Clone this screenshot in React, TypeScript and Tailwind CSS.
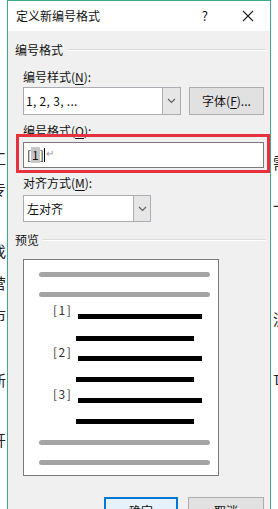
import React from "react";

const FONT = { fontFamily: '"Microsoft YaHei","Noto Sans CJK SC","Noto Sans",sans-serif' };

function Chevron() {
  return (
    <svg width="9" height="6" viewBox="0 0 9 6">
      <polyline points="1,1 4.5,4.5 8,1" fill="none" stroke="#606060" strokeWidth="1.2" />
    </svg>
  );
}

function U({ c }: { c: string }) {
  return <span className="underline underline-offset-2">{c}</span>;
}

function Bar({ gray, ml, w, mt }: { gray?: boolean; ml: number; w: number; mt: number }) {
  return (
    <div
      className={gray ? "h-[5px] rounded-full bg-[#a4a4a4]" : "h-[5px] bg-black"}
      style={{ marginLeft: ml, width: w, marginTop: mt }}
    />
  );
}

function NumRow({ n, mt }: { n: string; mt: number }) {
  return (
    <div className="relative" style={{ marginTop: mt }}>
      <span
        className="absolute left-[29px] top-[-11px] text-[12px] leading-[14px] text-[#333] tracking-[1.5px]"
        style={{ fontFamily: '"Noto Sans CJK SC",sans-serif' }}
      >
        [{n}]
      </span>
      <div className="ml-[54px] h-[5px] w-[124px] bg-black" />
    </div>
  );
}

export default function App() {
  const leftChars = [
    { y: 150, c: "工" },
    { y: 181, c: "专" },
    { y: 212, c: "'" },
    { y: 243, c: "找" },
    { y: 275, c: "营" },
    { y: 307, c: "市" },
    { y: 340, c: "'" },
    { y: 372, c: "新" },
    { y: 432, c: "开" },
  ];
  const rightChars = [
    { y: 155, c: "需" },
    { y: 198, c: "一" },
    { y: 311, c: "流" },
    { y: 370, c: "亡" },
  ];
  return (
    <div className="h-[509px] w-[278px] overflow-hidden bg-white flex" style={FONT}>
      <div className="relative w-[7px] h-full overflow-hidden">
        {leftChars.map((ch, i) => (
          <span
            key={i}
            className="absolute left-[-9px] text-[15px] leading-[16px] text-[#222]"
            style={{ top: ch.y }}
          >
            {ch.c}
          </span>
        ))}
      </div>
      <div className="w-[264px] h-[540px] shrink-0 border border-[#3da88a] bg-[#f0f0f0] flex flex-col">
        <div className="h-[30px] bg-white flex items-center text-[12px] text-[#111]">
          <span className="pl-[8px] leading-[16px]">定义新编号格式</span>
          <span className="ml-auto mr-[34px] leading-[16px] text-[13px]">?</span>
          <svg width="12" height="12" viewBox="0 0 12 12" className="mr-[16px]">
            <line x1="1" y1="1" x2="11" y2="11" stroke="#222" strokeWidth="1.1" />
            <line x1="11" y1="1" x2="1" y2="11" stroke="#222" strokeWidth="1.1" />
          </svg>
        </div>
        <div className="flex flex-col pl-[7px] text-[12px] text-[#111]">
          <div className="mt-[11px] flex items-center h-[16px]">
            <span className="leading-[16px]">编号格式</span>
            <div className="ml-[4px] mr-[4px] flex-1 h-[2px] border-t border-[#dcdcdc] border-b-white border-b" />
          </div>
          <div className="ml-[8px] mt-[11px] leading-[16px] h-[16px]">
            编号样式(<U c="N" />):
          </div>
          <div className="ml-[8px] mt-[2px] flex">
            <div className="w-[158px] h-[28px] border border-[#abadb3] bg-white flex">
              <span className="flex-1 pl-[2px] leading-[26px] text-[12px] tracking-[0.3px]">1, 2, 3, ...</span>
              <div className="w-[18px] h-full bg-[#e6e6e6] border-l border-[#abadb3] flex items-center justify-center">
                <Chevron />
              </div>
            </div>
            <div className="ml-[8px] w-[75px] h-[28px] border border-[#adadad] bg-[#e1e1e1] flex items-center justify-center leading-[16px]">
              字体(<U c="F" />)...
            </div>
          </div>
          <div className="ml-[8px] mt-[8px] leading-[16px] h-[16px]">
            编号格式(<U c="O" />):
          </div>
          <div className="ml-[8px] mt-[3px] relative">
            <div className="w-[241px] h-[26px] border border-[#7a7a7a] bg-white flex items-center pl-[3px] leading-[16px]">
              <span>[</span>
              <span className="bg-[#c8c8c8] px-[1px]">1</span>
              <span>]</span>
              <span className="w-px h-[14px] bg-black" />
              <span className="text-[10px] text-[#9a9a9a] ml-[1px] -mt-[4px]">↵</span>
            </div>
            <div className="absolute left-[-7px] top-[-8px] w-[254px] h-[39px] border-[3px] border-[#e5323e] pointer-events-none" />
          </div>
          <div className="ml-[8px] mt-[7px] leading-[16px] h-[16px]">
            对齐方式(<U c="M" />):
          </div>
          <div className="ml-[8px] mt-[4px] w-[128px] h-[27px] border border-[#abadb3] bg-white flex">
            <span className="flex-1 pl-[3px] leading-[25px]">左对齐</span>
            <div className="w-[17px] h-full bg-[#e6e6e6] border-l border-[#abadb3] flex items-center justify-center">
              <Chevron />
            </div>
          </div>
          <div className="mt-[10px] flex items-center h-[16px]">
            <span className="leading-[16px]">预览</span>
            <div className="ml-[4px] mr-[4px] flex-1 h-[2px] border-t border-[#dcdcdc] border-b-white border-b" />
          </div>
          <div className="ml-[8px] mt-[11px] w-[196px] h-[217px] border border-[#7a7a7a] bg-white flex flex-col">
            <Bar gray ml={15} w={171} mt={12} />
            <Bar gray ml={15} w={171} mt={15} />
            <NumRow n="1" mt={17} />
            <Bar ml={52} w={118} mt={17} />
            <NumRow n="2" mt={15} />
            <Bar ml={52} w={118} mt={16} />
            <NumRow n="3" mt={16} />
            <Bar ml={52} w={118} mt={16} />
            <Bar gray ml={15} w={171} mt={16} />
            <Bar gray ml={15} w={171} mt={15} />
          </div>
          <div className="mt-[21px] flex justify-end pr-[6px] gap-[10px]">
            <div className="w-[74px] h-[28px] border-2 border-[#0078d7] bg-[#e5f1fb] flex items-center justify-center leading-[16px]">
              确定
            </div>
            <div className="w-[76px] h-[28px] border border-[#adadad] bg-[#e1e1e1] flex items-center justify-center leading-[16px]">
              取消
            </div>
          </div>
        </div>
      </div>
      <div className="relative flex-1 h-full overflow-hidden">
        {rightChars.map((ch, i) => (
          <span
            key={i}
            className="absolute left-[2px] text-[15px] leading-[16px] text-[#222]"
            style={{ top: ch.y }}
          >
            {ch.c}
          </span>
        ))}
      </div>
    </div>
  );
}
